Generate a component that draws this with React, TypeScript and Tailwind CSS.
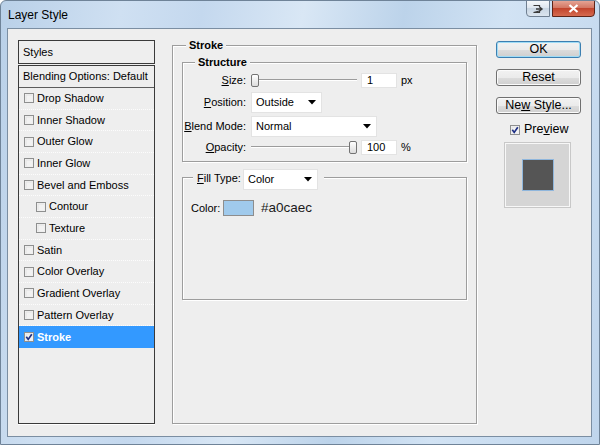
import React from "react";

function Check({ checked = false }: { checked?: boolean }) {
  return (
    <svg width="10" height="10" viewBox="0 0 10 10" className="shrink-0 block">
      <rect x="0.5" y="0.5" width="9" height="9" fill="#f6f6f6" stroke="#8e8f8f" />
      <rect x="1.5" y="1.5" width="7" height="7" fill="#e2e2e2" />
      <rect x="2.5" y="2.5" width="6" height="6" fill="#f2f2f2" />
      {checked && (
        <path d="M2.3 4.8 L4.2 7.4 L7.8 2.2" stroke="#1d2f85" strokeWidth="1.7" fill="none" />
      )}
    </svg>
  );
}

function Arrow() {
  return (
    <svg width="8" height="5" viewBox="0 0 8 5" className="block">
      <path d="M0 0 H8 L4 4.5 Z" fill="#000" />
    </svg>
  );
}

function Dropdown({ value, w }: { value: string; w: string }) {
  return (
    <div
      className={`${w} h-[21px] bg-white border border-[#e3e3e3] flex items-center justify-between pl-[4px] pr-[5px] text-[11px] text-black`}
    >
      <span>{value}</span>
      <Arrow />
    </div>
  );
}

function Slider({ pos }: { pos: "start" | "end" }) {
  return (
    <div className="w-[106px] h-[16px] flex items-center">
      <div className="w-full flex items-center">
        {pos === "start" && <Thumb />}
        <div className="flex-1 h-[2px] border-t border-[#9c9c9c] border-b border-b-white" />
        {pos === "end" && <Thumb />}
      </div>
    </div>
  );
}

function Thumb() {
  return (
    <div className="w-[8px] h-[13px] shrink-0 rounded-[2px] border border-[#737373] bg-[linear-gradient(#ffffff,#dcdcdc)]" />
  );
}

function NumInput({ value }: { value: string }) {
  return (
    <div className="w-[36px] h-[15px] bg-white border border-[#e3e3e3] flex items-center pl-[5px] text-[11px] text-black">
      {value}
    </div>
  );
}

const items: { l: string; sub?: boolean; checked?: boolean; sel?: boolean }[] = [
  { l: "Drop Shadow" },
  { l: "Inner Shadow" },
  { l: "Outer Glow" },
  { l: "Inner Glow" },
  { l: "Bevel and Emboss" },
  { l: "Contour", sub: true },
  { l: "Texture", sub: true },
  { l: "Satin" },
  { l: "Color Overlay" },
  { l: "Gradient Overlay" },
  { l: "Pattern Overlay" },
  { l: "Stroke", checked: true, sel: true },
];

function Btn({ children, def = false, mt }: { children: React.ReactNode; def?: boolean; mt: string }) {
  return (
    <div
      className={`${mt} w-[85px] h-[17px] rounded-[3px] border ${
        def ? "border-[#3c7fb1] shadow-[inset_0_0_0_1px_#9fdcf6]" : "border-[#707070] shadow-[inset_0_0_0_1px_#fbfbfb]"
      } bg-[linear-gradient(#f2f2f2_0%,#ebebeb_50%,#dddddd_50%,#cfcfcf_100%)] flex items-center justify-center text-[12.5px] leading-none text-black`}
    >
      {children}
    </div>
  );
}

export default function App() {
  return (
    <div className="w-[600px] h-[445px] flex flex-col rounded-t-[6px] border border-[#6f8398] bg-[linear-gradient(100deg,#b9d0e8_0%,#cfe0f2_18%,#c4d8ee_30%,#d9e7f5_45%,#bcd3ea_60%,#d2e3f4_75%,#bfd5ec_100%)] font-['Liberation_Sans',Arial,sans-serif] overflow-hidden">
      {/* title bar */}
      <div className="h-[27px] shrink-0 flex items-start justify-between">
        <div className="ml-[7px] mt-[7px] text-[12px] leading-[14px] text-black">Layer Style</div>
        <div className="flex items-start -mt-[1px] mr-[4px]">
          <div className="w-[24px] h-[17px] rounded-bl-[4px] border border-[#6f7f91] bg-[linear-gradient(#f4f7fa,#dce5ee_50%,#c9d6e3_50%,#dbe5ef)] flex items-center justify-center">
            <svg width="12" height="10" viewBox="0 0 12 10" className="block">
              <path d="M1.5 1.5 H7.5 V3 M7.5 7 V8.5 H1.5 Z" stroke="#3a3a3a" strokeWidth="1.2" fill="none" />
              <path d="M4 5 H9 M7.5 3 L10 5 L7.5 7" stroke="#3a3a3a" strokeWidth="1.4" fill="none" />
            </svg>
          </div>
          <div className="ml-[2px] w-[43px] h-[17px] rounded-br-[4px] border border-[#5e2418] bg-[linear-gradient(#e5a394,#d37764_45%,#c2452e_50%,#d56a4f)] flex items-center justify-center">
            <svg width="11" height="9" viewBox="0 0 11 9" className="block">
              <path d="M1.5 1 L9.5 8 M9.5 1 L1.5 8" stroke="#ffffff" strokeWidth="2.2" />
            </svg>
          </div>
        </div>
      </div>

      {/* client */}
      <div className="flex-1 ml-[6px] mr-[7px] mb-[7px] border border-[#7b8ea2] bg-[#eeeeee] flex items-start pl-[10px] pt-[11px] text-[11px] text-black">
        {/* list */}
        <div className="w-[137px] shrink-0 flex flex-col">
          <div className="h-[24px] border border-[#3a3a3a] flex items-center pl-[4px] pt-[1px]">Styles</div>
          <div className="mt-[1px] h-[359px] border border-[#3a3a3a] shadow-[0_1px_0_#ffffff] flex flex-col">
            <div className="h-[22px] shrink-0 border-b border-[#5c5c5c] flex items-center pl-[4px]">
              Blending Options: Default
            </div>
            {items.map((it) => (
              <div
                key={it.l}
                className={`h-[21.67px] shrink-0 flex items-center gap-[3px] ${it.sub ? "pl-[17px]" : "pl-[5px]"} ${
                  it.sel ? "bg-[#3399ff] text-white font-bold" : "border-b border-dotted border-[#fcfcfc]"
                }`}
              >
                <Check checked={it.checked} />
                <span>{it.l}</span>
              </div>
            ))}
          </div>
        </div>

        {/* main stroke group */}
        <div className="ml-[17px] mt-[5px] w-[305px] h-[379px] shrink-0 border border-[#9d9d9d] shadow-[inset_1px_1px_0_#ffffff,1px_1px_0_#ffffff] flex flex-col">
          <div className="-mt-[7px] ml-[13px] px-[3px] w-fit bg-[#eeeeee] font-bold leading-[13px]">Stroke</div>

          {/* Structure */}
          <div className="mt-[10px] mx-[9px] h-[100px] border border-[#9d9d9d] shadow-[inset_1px_1px_0_#ffffff,1px_1px_0_#ffffff] flex flex-col">
            <div className="-mt-[7px] ml-[12px] px-[3px] w-fit bg-[#eeeeee] font-bold leading-[13px]">Structure</div>

            <div className="mt-[3px] h-[16px] flex items-center">
              <div className="w-[63px] text-right">
                <span className="underline">S</span>ize:
              </div>
              <div className="ml-[5px]">
                <Slider pos="start" />
              </div>
              <div className="ml-[4px]">
                <NumInput value="1" />
              </div>
              <div className="ml-[4px]">px</div>
            </div>

            <div className="mt-[4px] h-[21px] flex items-center">
              <div className="w-[63px] text-right">
                <span className="underline">P</span>osition:
              </div>
              <div className="ml-[5px]">
                <Dropdown value="Outside" w="w-[71px]" />
              </div>
            </div>

            <div className="mt-[3px] h-[21px] flex items-center">
              <div className="w-[63px] text-right">
                <span className="underline">B</span>lend Mode:
              </div>
              <div className="ml-[5px]">
                <Dropdown value="Normal" w="w-[126px]" />
              </div>
            </div>

            <div className="mt-[2px] h-[16px] flex items-center">
              <div className="w-[63px] text-right">
                <span className="underline">O</span>pacity:
              </div>
              <div className="ml-[5px]">
                <Slider pos="end" />
              </div>
              <div className="ml-[4px]">
                <NumInput value="100" />
              </div>
              <div className="ml-[4px]">%</div>
            </div>
          </div>

          {/* Fill type */}
          <div className="mt-[15px] mx-[9px] h-[123px] border border-[#9d9d9d] shadow-[inset_1px_1px_0_#ffffff,1px_1px_0_#ffffff] flex flex-col">
            <div className="-mt-[9px] ml-[10px] pl-[4px] pr-[6px] w-fit bg-[#eeeeee] flex items-start">
              <div className="w-[46px] mt-[2px] leading-[14px]">
                <span className="underline">F</span>ill Type:
              </div>
              <Dropdown value="Color" w="w-[75px]" />
            </div>
            <div className="mt-[10px] ml-[8px] h-[16px] flex items-center">
              <div className="w-[32px]">Color:</div>
              <div className="w-[31px] h-[16px] border border-[#8d8d8d] bg-[#a0caec]" />
              <div className="ml-[7px] text-[13.5px] text-[#1a1a1a]">#a0caec</div>
            </div>
          </div>
        </div>

        {/* buttons */}
        <div className="ml-[19px] w-[85px] shrink-0 flex flex-col">
          <Btn def mt="mt-[1px]">OK</Btn>
          <Btn mt="mt-[11px]">Reset</Btn>
          <Btn mt="mt-[11px]">
            <span>
              Ne<span className="underline">w</span> Style...
            </span>
          </Btn>
          <div className="mt-[10px] h-[11px] ml-[14px] flex items-center gap-[4px] text-[12.5px]">
            <Check checked />
            <span>
              Pre<span className="underline">v</span>iew
            </span>
          </div>
          <div className="mt-[8px] ml-[9px] w-[65px] h-[64px] border border-[#f7f7f7] bg-[#d5d5d5] shadow-[0_0_0_1px_#c8c8c8] flex items-center justify-center">
            <div className="w-[32px] h-[32px] bg-[#555555] border border-[#8fb6dc]" />
          </div>
        </div>
      </div>
    </div>
  );
}
